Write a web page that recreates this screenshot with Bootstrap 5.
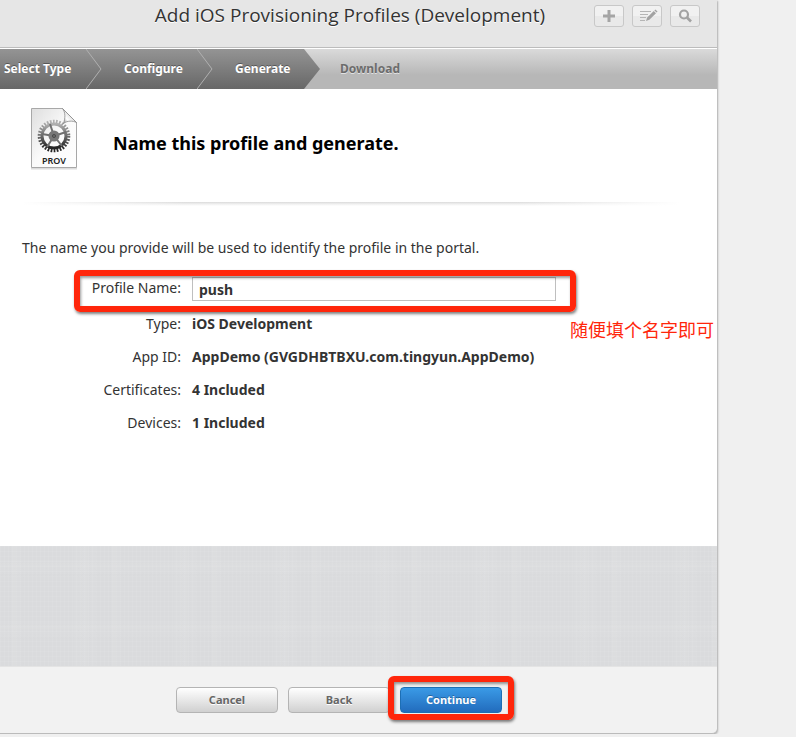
<!DOCTYPE html>
<html lang="en">
<head>
<meta charset="utf-8">
<meta name="viewport" content="width=device-width, initial-scale=1">
<title>Add iOS Provisioning Profiles (Development)</title>
<link href="https://cdn.jsdelivr.net/npm/bootstrap@5.3.0/dist/css/bootstrap.min.css" rel="stylesheet">
<style>
  body { background: #f0f0f0; color: #333; font-family: "Noto Sans", "Open Sans", "Noto Sans CJK SC", sans-serif; font-size: 14px; line-height: 20px; }
  .portal { margin-right: 79px; background: #f2f2f2; border-bottom: 1px solid #bbb; border-bottom-right-radius: 5px; box-shadow: 1px 1px 2px rgba(0,0,0,.28); overflow: hidden; }

  .titlebar { display: grid; grid-template-columns: 1fr auto 1fr; height: 48px; padding: 5px 17px 0 0; background: #e6e6e6; border-bottom: 1px solid #bcbcbc; }
  .titlebar h1 { grid-column: 2; font-family: "Open Sans", "Noto Sans", sans-serif; font-size: 19px; line-height: 20px; font-weight: 400; text-shadow: 0 1px 0 #fff; }
  .tool { width: 30px; height: 22px; padding: 0; border: 1px solid #c8c8c8; border-radius: 3px; background: linear-gradient(#f1f1f1 50%, #e9e9e9 50%); line-height: 0; }
  .tool:hover { background: #f6f6f6; border-color: #bbb; }

  .steps { height: 41px; border-top: 1px solid #fff; background: linear-gradient(#dadada, #b7b7b7 65%, #b7b7b7); font-size: 12px; font-weight: 700; line-height: 40px; }
  .steps-done { background: linear-gradient(#949494, #676767); clip-path: polygon(0 0, 304px 0, 100% 50%, 304px 100%, 0 100%); color: #fff; text-shadow: 0 -1px 0 rgba(0,0,0,.35); }
  .step { display: flex; justify-content: space-between; height: 40px; padding-left: 22px; }
  .step-first { width: 102px; padding-left: 4px; }
  .step-mid { width: 111px; }
  .step-last { width: 107px; }
  .step-todo { padding-left: 20px; color: #6c6c6c; text-shadow: 0 1px 0 #e2e2e2; }

  .sheet { background: #fff; min-height: 457px; padding-left: 22px; }
  .sheet-head { gap: 28px; padding: 16px 0 0 4px; }
  .sheet-head h2 { font-size: 18px; line-height: 24px; font-weight: 700; color: #000; padding-top: 6px; }
  .fade-rule { height: 4px; margin: 27px 38px 0 0; background: linear-gradient(90deg, #fff, transparent 25%, transparent 75%, #fff), linear-gradient(#dadada, #f0f0f0 50%, #fff); }
  .intro { margin-top: 32px; }
  .field { display: flex; gap: 11px; height: 33px; align-items: center; }
  .field dt { width: 159px; text-align: right; font-weight: 400; }
  .field dd { font-weight: 700; margin: 0; }
  .field-name { height: 42px; margin: 12px 0 -5px; padding-bottom: 4px; position: relative; }
  .field-name dt { padding-bottom: 3px; }
  .name-input { width: 364px; height: 24px; padding: 0 6px; border: 1px solid #bfbfbf; border-radius: 0; background: #fff; color: #333; font-weight: 700; display: block; }
  .marker { position: absolute; border: 6px solid #ff260b; border-radius: 6px; box-shadow: 1px 2px 3px rgba(0,0,0,.5), inset 1px 2px 3px rgba(0,0,0,.4); pointer-events: none; }
  .marker-name { inset: 0 auto 0 52px; width: 502px; }
  .marker-go { inset: -11px -12px -7px -12px; }
  .remark { position: absolute; right: 3px; top: 47px; color: #ff260b; font-family: "Noto Sans CJK SC", sans-serif; font-size: 18px; line-height: 24px; }

  .linen { height: 121px; border-bottom: 1px solid #e4e4e4; background-color: #dadbdd;
    background-image:
      repeating-linear-gradient(90deg, rgba(255,255,255,.06) 0 1px, transparent 1px 4px),
      repeating-linear-gradient(rgba(255,255,255,.06) 0 1px, transparent 1px 5px),
      linear-gradient(90deg, transparent 10%, rgba(255,255,255,.05) 14%, transparent 24%, transparent 70%, rgba(255,255,255,.05) 84%, transparent),
      linear-gradient(transparent 20%, rgba(255,255,255,.05) 30%, transparent 50%);
    background-size: auto, auto, 100px 62px, 100px 62px; }

  .actions { gap: 10px; padding: 20px 39px 20px 0; }
  .action { width: 102px; height: 26px; padding: 0; border: 1px solid #b4b4b4; border-radius: 4px; background: linear-gradient(#fff, #d0d0d0); color: #666; font-size: 11px; line-height: 24px; font-weight: 700; text-shadow: 0 1px 0 #fff; display: block; }
  .action:hover { background: linear-gradient(#fff, #c4c4c4); color: #444; }
  .action-go { border-color: #1d6fb5; background: linear-gradient(#3a9ae6, #226cbd); color: #fff; text-shadow: 0 -1px 0 rgba(0,0,0,.3); }
  .action-go:hover { background: #226cbd; color: #fff; }
</style>
</head>
<body>
<main class="portal">
  <header class="titlebar">
    <h1 class="m-0">Add iOS Provisioning Profiles (Development)</h1>
    <div class="d-flex justify-content-end gap-2">
      <button class="btn tool" type="button" aria-label="Add"><svg width="28" height="20" viewBox="0 0 28 20"><path d="M14 4v12M8 10h12" stroke="#a5a5a5" stroke-width="3"/></svg></button>
      <button class="btn tool" type="button" aria-label="Edit"><svg width="28" height="20" viewBox="0 0 28 20"><path d="M7 5.500h11M7 8.500h8M7 11.500h6M7 14.500h5" stroke="#b5b5b5"/><path d="M13 15l1.200-3.500 6.600-6.400 2.200 2.100-6.600 6.600z" fill="#a2a2a2"/><path d="M21.400 4.500l1-.9 2.100 2-.9 1z" fill="#a2a2a2"/></svg></button>
      <button class="btn tool" type="button" aria-label="Search"><svg width="28" height="20" viewBox="0 0 28 20"><circle cx="13" cy="8.500" r="4" fill="none" stroke="#a2a2a2" stroke-width="2.200"/><path d="M16 11.500l4 4" stroke="#a2a2a2" stroke-width="2.600"/></svg></button>
    </div>
  </header>

  <ol class="steps d-flex list-unstyled m-0">
    <li class="steps-done">
      <ol class="d-flex list-unstyled m-0">
        <li class="step step-first">Select Type<svg width="16" height="40"><path d="M0 0L15 20L0 40" fill="none" stroke="#b0b0b0"/></svg></li>
        <li class="step step-mid">Configure<svg width="16" height="40"><path d="M0 0L15 20L0 40" fill="none" stroke="#b0b0b0"/></svg></li>
        <li class="step step-last" aria-current="step">Generate</li>
      </ol>
    </li>
    <li class="step-todo">Download</li>
  </ol>

  <section class="sheet">
    <div class="sheet-head d-flex align-items-center">
      <svg width="59" height="70" viewBox="0 0 59 70" role="img" aria-label="Provisioning profile">
        <defs>
          <linearGradient id="paper" x1="0" y1="0" x2="1" y2="1"><stop offset="0" stop-color="#dedede"/><stop offset=".5" stop-color="#fafafa"/><stop offset="1" stop-color="#fff"/></linearGradient>
          <linearGradient id="steel" x1="0" y1="0" x2="0" y2="1"><stop offset="0" stop-color="#b0b0b0"/><stop offset="1" stop-color="#242424"/></linearGradient>
          <linearGradient id="fold" x1="0" y1="1" x2="1" y2="0"><stop offset="0" stop-color="#777"/><stop offset=".3" stop-color="#fff"/><stop offset=".6" stop-color="#ddd"/><stop offset="1" stop-color="#888"/></linearGradient>
        </defs>
        <path d="M5 63.500h46" stroke="#bbb" stroke-width="2" opacity=".5"/>
        <path d="M5.500 3.500h31l14 14v45h-45z" fill="url(#paper)" stroke="#a8a8a8"/>
        <circle cx="28" cy="31" r="14.500" fill="none" stroke="url(#steel)" stroke-width="3.600" stroke-dasharray="1.700 1.337"/>
        <circle cx="28" cy="31" r="12" fill="none" stroke="url(#steel)" stroke-width="3"/>
        <path d="M28 31L24 19M28 31l12-4M28 31l8 10M28 31l-7 11M28 31l-12-2" stroke="#707070" stroke-width="2"/>
        <circle cx="28" cy="31" r="5.500" fill="#777"/><circle cx="28" cy="31" r="1.800" fill="#333"/><circle cx="28" cy="31" r=".7" fill="#bbb"/>
        <path d="M36.500 3.500c3 4 3 9 1 15c4-3 9-3 13-1z" fill="url(#fold)" stroke="#888" stroke-width=".8"/>
        <text x="28" y="59" text-anchor="middle" font-family="Noto Sans, sans-serif" font-size="9" font-weight="600" fill="#222">PROV</text>
      </svg>
      <h2 class="m-0">Name this profile and generate.</h2>
    </div>
    <div class="fade-rule"></div>

    <p class="intro mb-0">The name you provide will be used to identify the profile in the portal.</p>
    <div class="position-relative">
      <dl class="m-0">
        <div class="field field-name">
          <dt><label for="profile-name">Profile Name:</label></dt>
          <dd><input class="name-input" id="profile-name" type="text" value="push"></dd>
          <span class="marker marker-name"></span>
        </div>
        <div class="field"><dt>Type:</dt><dd>iOS Development</dd></div>
        <div class="field"><dt>App ID:</dt><dd>AppDemo (GVGDHBTBXU.com.tingyun.AppDemo)</dd></div>
        <div class="field"><dt>Certificates:</dt><dd>4 Included</dd></div>
        <div class="field"><dt>Devices:</dt><dd>1 Included</dd></div>
      </dl>
      <span class="remark" lang="zh-CN">随便填个名字即可</span>
    </div>
  </section>

  <div class="linen"></div>

  <footer class="actions d-flex justify-content-center">
    <button class="btn action" type="button">Cancel</button>
    <button class="btn action" type="button">Back</button>
    <div class="position-relative">
      <button class="btn action action-go" type="submit">Continue</button>
      <span class="marker marker-go"></span>
    </div>
  </footer>
</main>
<script src="https://cdn.jsdelivr.net/npm/bootstrap@5.3.0/dist/js/bootstrap.bundle.min.js"></script>
</body>
</html>
